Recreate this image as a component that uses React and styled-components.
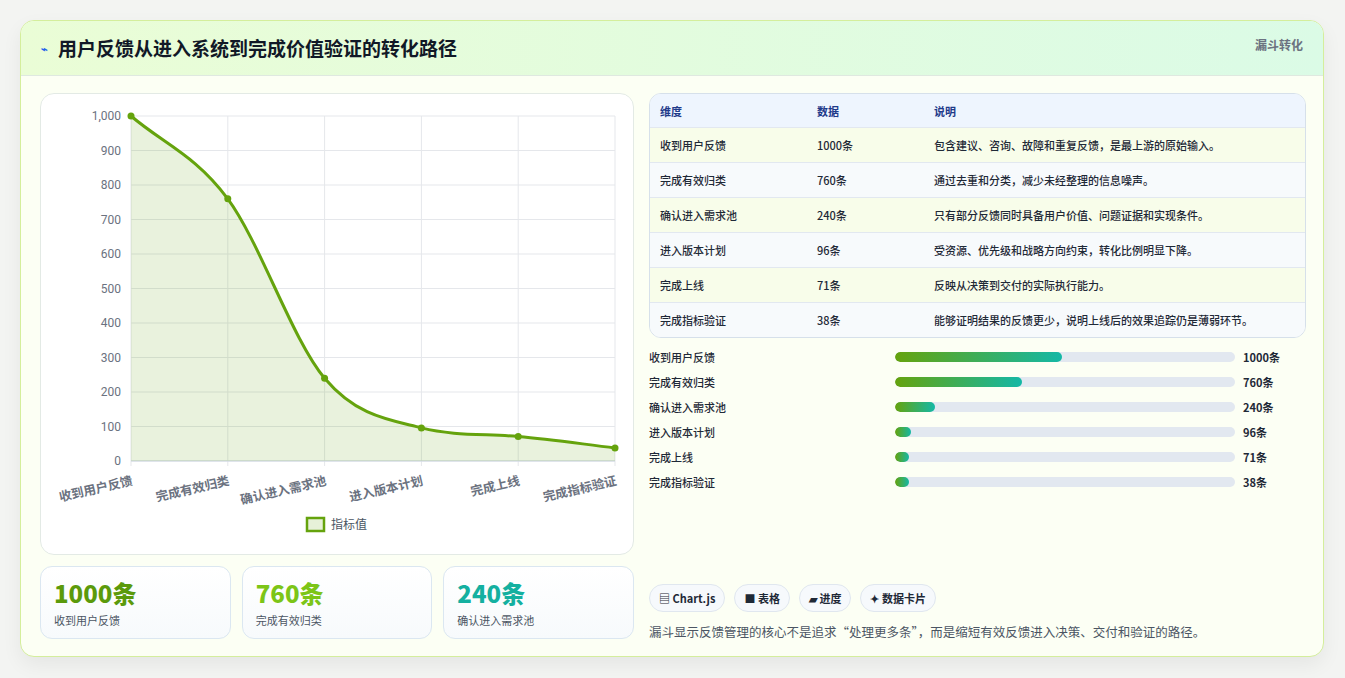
import React from "react";
import styled, { createGlobalStyle } from "styled-components";

const G = createGlobalStyle`
  body{margin:0;background:#f3f4f2;font-family:"Noto Sans CJK SC","Noto Sans",sans-serif;}
`;
const Page = styled.div`padding:20px 21px 21px 20px;`;
const Card = styled.div`
  width:1304px;height:637px;box-sizing:border-box;border:1px solid #d4ee9c;border-radius:14px;
  background:#fcfff4;overflow:hidden;display:flex;flex-direction:column;
  box-shadow:0 8px 20px rgba(0,0,0,0.06);
`;
const Header = styled.div`
  height:55px;box-sizing:border-box;display:flex;align-items:center;justify-content:space-between;
  padding:0 20px 0 20px;background:linear-gradient(90deg,#eafdd6,#dbfbe6);border-bottom:1px solid #dfe9e0;
`;
const Title = styled.div`font-size:19px;font-weight:700;color:#111827;display:flex;align-items:center;gap:10px;line-height:26px;`;
const Icon = styled.span`font-size:11px;color:#2563eb;`;
const Tag = styled.div`font-size:12px;font-weight:700;color:#6b7280;align-self:flex-start;margin-top:16px;line-height:16px;`;
const Body = styled.div`display:grid;grid-template-columns:594px 657px;gap:15px;padding:17px 19px 0 19px;`;
const Left = styled.div`display:flex;flex-direction:column;gap:11px;`;
const ChartBox = styled.div`height:462px;box-sizing:border-box;border:1px solid #e3eae5;border-radius:14px;background:#fff;overflow:hidden;`;
const Stats = styled.div`display:grid;grid-template-columns:repeat(3,1fr);gap:11px;`;
const Stat = styled.div`height:73px;box-sizing:border-box;border:1px solid #dbe7f1;border-radius:12px;background:linear-gradient(180deg,#fff,#f7fafc);padding:9px 13px;`;
const StatV = styled.div`font-size:24px;font-weight:800;line-height:34px;color:${p=>p.c};`;
const StatL = styled.div`font-size:11px;color:#4b5563;margin-top:2px;line-height:16px;`;
const Right = styled.div`display:flex;flex-direction:column;`;
const Table = styled.div`border:1px solid #d6e0ea;border-radius:12px;overflow:hidden;background:#fff;`;
const Row = styled.div`
  display:grid;grid-template-columns:157px 117px 1fr;height:${p=>p.h?33:35}px;box-sizing:border-box;align-items:center;padding-left:10px;
  font-size:11px;line-height:14px;color:${p=>p.h?"#1e3a8a":"#1f2937"};font-weight:${p=>p.h?600:500};
  background:${p=>p.h?"#eef5fe":p.odd?"#f8fdea":"#f7fafc"};
  border-top:${p=>p.h?"none":"1px solid #e2e8f0"};
`;
const Bars = styled.div`display:flex;flex-direction:column;gap:8px;margin-top:10px;`;
const BarRow = styled.div`display:grid;grid-template-columns:246px 340px 1fr;align-items:center;height:17px;font-size:11px;line-height:14px;font-weight:500;color:#1f2937;`;
const Track = styled.div`height:10px;border-radius:5px;background:#e2e8f0;overflow:hidden;`;
const Fill = styled.div`height:100%;border-radius:5px;background:linear-gradient(90deg,#65a30d,#14b8a6);`;
const BarV = styled.span`font-weight:700;padding-left:8px;`;
const Chips = styled.div`display:flex;gap:9px;margin-top:94px;`;
const Chip = styled.div`height:28px;box-sizing:border-box;padding:0 9px;border:1px solid #e0e7ef;border-radius:14px;background:#f6f9fc;font-size:11px;font-weight:600;color:#1f2937;display:flex;align-items:center;gap:3px;`;
const Note = styled.div`font-size:12.5px;line-height:18px;color:#4b5563;margin-top:11px;`;

const data=[["收到用户反馈",1000,"包含建议、咨询、故障和重复反馈，是最上游的原始输入。"],["完成有效归类",760,"通过去重和分类，减少未经整理的信息噪声。"],["确认进入需求池",240,"只有部分反馈同时具备用户价值、问题证据和实现条件。"],["进入版本计划",96,"受资源、优先级和战略方向约束，转化比例明显下降。"],["完成上线",71,"反映从决策到交付的实际执行能力。"],["完成指标验证",38,"能够证明结果的反馈更少，说明上线后的效果追踪仍是薄弱环节。"]];

function monotone(xs,ys){
  const n=xs.length,d=[],m=[];
  for(let i=0;i<n-1;i++)d.push((ys[i+1]-ys[i])/(xs[i+1]-xs[i]));
  m[0]=d[0];m[n-1]=d[n-2];
  for(let i=1;i<n-1;i++)m[i]=d[i-1]*d[i]<=0?0:(d[i-1]+d[i])/2;
  for(let i=0;i<n-1;i++){
    if(d[i]===0){m[i]=0;m[i+1]=0;continue;}
    const a=m[i]/d[i],b=m[i+1]/d[i],s=a*a+b*b;
    if(s>9){const t=3/Math.sqrt(s);m[i]=t*a*d[i];m[i+1]=t*b*d[i];}
  }
  let p=`M${xs[0]},${ys[0]}`;
  for(let i=0;i<n-1;i++){
    const h=(xs[i+1]-xs[i])/3;
    p+=` C${xs[i]+h},${ys[i]+m[i]*h} ${xs[i+1]-h},${ys[i+1]-m[i+1]*h} ${xs[i+1]},${ys[i+1]}`;
  }
  return p;
}

function Chart(){
  const x0=90,x1=574,yt=22,yb=367;
  const xs=data.map((_,i)=>x0+i*(x1-x0)/5);
  const ys=data.map(d=>yb-d[1]/1000*(yb-yt));
  const path=monotone(xs,ys);
  const area=path+` L${x1},${yb} L${x0},${yb} Z`;
  return(
    <svg width="592" height="460" style={{display:"block"}}>
      {Array.from({length:11}).map((_,i)=>{const y=yb-i*(yb-yt)/10;return(<g key={i}><line x1={x0} x2={x1} y1={y} y2={y} stroke="#e5e7eb"/><text x={x0-10} y={y+4} textAnchor="end" fontSize="12" fill="#6b7280" fontFamily="Roboto, sans-serif">{i===10?"1,000":i*100}</text></g>)})}
      {xs.map((x,i)=><line key={i} x1={x} x2={x} y1={yt} y2={yb+5} stroke="#e5e7eb"/>)}
      <line x1={x0} x2={x1} y1={yb} y2={yb} stroke="#cbd5e1"/>
      <path d={area} fill="rgba(101,163,13,0.14)"/>
      <path d={path} fill="none" stroke="#65a30d" strokeWidth="3"/>
      {xs.map((x,i)=><circle key={i} cx={x} cy={ys[i]} r="3.5" fill="#65a30d"/>)}
      {xs.map((x,i)=><text key={i} transform={`translate(${x},${yb+14}) rotate(-13)`} textAnchor="end" dy="10" fontSize="12.5" fontWeight="600" fill="#6b7280">{data[i][0]}</text>)}
      <rect x="266" y="424" width="17" height="13" fill="#e7f1d8" stroke="#65a30d" strokeWidth="2.5"/>
      <text x="290" y="435" fontSize="12" fill="#4b5563">指标值</text>
    </svg>
  );
}

export default function App(){
  return(<Page><G/><Card>
    <Header><Title><Icon>⌁</Icon>用户反馈从进入系统到完成价值验证的转化路径</Title><Tag>漏斗转化</Tag></Header>
    <Body>
      <Left>
        <ChartBox><Chart/></ChartBox>
        <Stats>
          <Stat><StatV c="#5b9a0b">1000条</StatV><StatL>收到用户反馈</StatL></Stat>
          <Stat><StatV c="#7cc517">760条</StatV><StatL>完成有效归类</StatL></Stat>
          <Stat><StatV c="#14b0a0">240条</StatV><StatL>确认进入需求池</StatL></Stat>
        </Stats>
      </Left>
      <Right>
        <Table>
          <Row h><span>维度</span><span>数据</span><span>说明</span></Row>
          {data.map((d,i)=><Row key={i} odd={i%2===0}><span>{d[0]}</span><span>{d[1]}条</span><span>{d[2]}</span></Row>)}
        </Table>
        <Bars>
          {data.map((d,i)=><BarRow key={i}><span>{d[0]}</span><Track><Fill style={{width:`${Math.max(d[1]/1000*49,4)}%`}}/></Track><BarV>{d[1]}条</BarV></BarRow>)}
        </Bars>
        <Chips><Chip>▤ Chart.js</Chip><Chip>■ 表格</Chip><Chip>▰ 进度</Chip><Chip>✦ 数据卡片</Chip></Chips>
        <Note>漏斗显示反馈管理的核心不是追求“处理更多条”，而是缩短有效反馈进入决策、交付和验证的路径。</Note>
      </Right>
    </Body>
  </Card></Page>);
}
